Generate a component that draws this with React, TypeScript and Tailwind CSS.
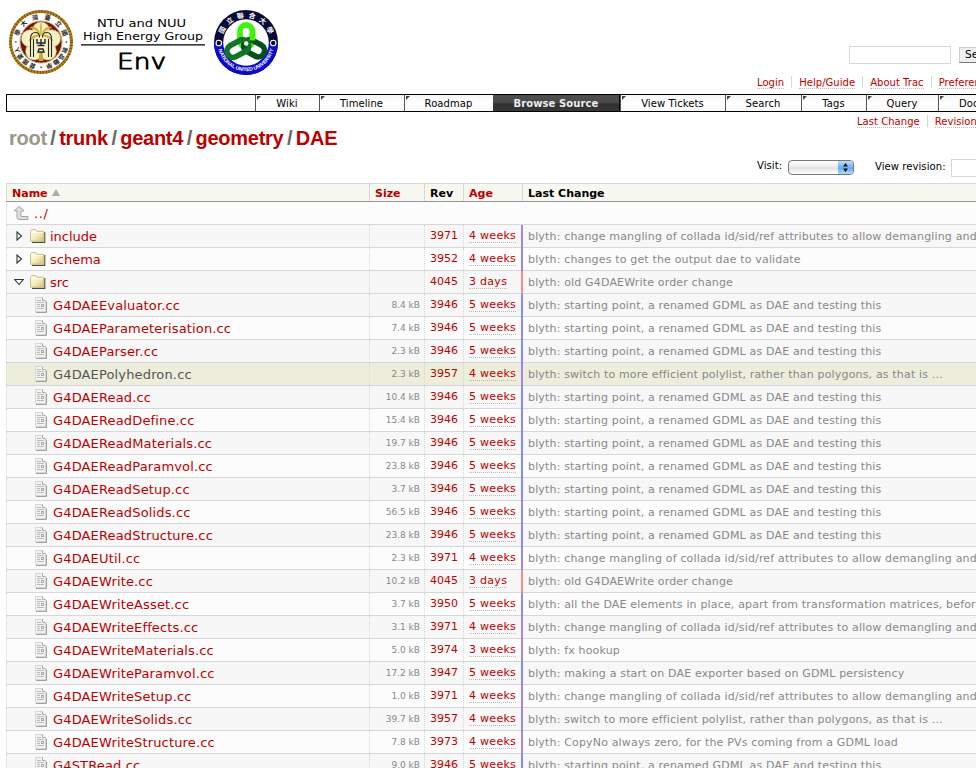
import React from "react";

type Entry = { name: string; kind: "closed" | "open" | "file"; size?: string; rev: string; age: string; msg: string; bar: string; hot?: boolean };

const START = "blyth: starting point, a renamed GDML as DAE and testing this";
const MANGLE = "blyth: change mangling of collada id/sid/ref attributes to allow demangling and";
const POLY = "blyth: switch to more efficient polylist, rather than polygons, as that is …";
const OLD = "blyth: old G4DAEWrite order change";
const B5 = "#8888ff";
const B4 = "#9b88e8";
const BN = "#ff8888";
const B3 = "#a988dc";

const file = (name: string, size: string, rev: string, age: string, msg: string, bar: string, hot = false): Entry => ({ name, kind: "file", size, rev, age, msg, bar, hot });

const ENTRIES: Entry[] = [
  { name: "include", kind: "closed", rev: "3971", age: "4 weeks", msg: MANGLE, bar: B4 },
  { name: "schema", kind: "closed", rev: "3952", age: "4 weeks", msg: "blyth: changes to get the output dae to validate", bar: "#9088f4" },
  { name: "src", kind: "open", rev: "4045", age: "3 days", msg: OLD, bar: BN },
  file("G4DAEEvaluator.cc", "8.4 kB", "3946", "5 weeks", START, B5),
  file("G4DAEParameterisation.cc", "7.4 kB", "3946", "5 weeks", START, B5),
  file("G4DAEParser.cc", "2.3 kB", "3946", "5 weeks", START, B5),
  file("G4DAEPolyhedron.cc", "2.3 kB", "3957", "4 weeks", POLY, B4, true),
  file("G4DAERead.cc", "10.4 kB", "3946", "5 weeks", START, B5),
  file("G4DAEReadDefine.cc", "15.4 kB", "3946", "5 weeks", START, B5),
  file("G4DAEReadMaterials.cc", "19.7 kB", "3946", "5 weeks", START, B5),
  file("G4DAEReadParamvol.cc", "23.8 kB", "3946", "5 weeks", START, B5),
  file("G4DAEReadSetup.cc", "3.7 kB", "3946", "5 weeks", START, B5),
  file("G4DAEReadSolids.cc", "56.5 kB", "3946", "5 weeks", START, B5),
  file("G4DAEReadStructure.cc", "23.8 kB", "3946", "5 weeks", START, B5),
  file("G4DAEUtil.cc", "2.3 kB", "3971", "4 weeks", MANGLE, B4),
  file("G4DAEWrite.cc", "10.2 kB", "4045", "3 days", OLD, BN),
  file("G4DAEWriteAsset.cc", "3.7 kB", "3950", "5 weeks", "blyth: all the DAE elements in place, apart from transformation matrices, before", B5),
  file("G4DAEWriteEffects.cc", "3.1 kB", "3971", "4 weeks", MANGLE, B3),
  file("G4DAEWriteMaterials.cc", "5.0 kB", "3974", "3 weeks", "blyth: fx hookup", B3),
  file("G4DAEWriteParamvol.cc", "17.2 kB", "3947", "5 weeks", "blyth: making a start on DAE exporter based on GDML persistency", B5),
  file("G4DAEWriteSetup.cc", "1.0 kB", "3971", "4 weeks", MANGLE, B3),
  file("G4DAEWriteSolids.cc", "39.7 kB", "3957", "4 weeks", POLY, B4),
  file("G4DAEWriteStructure.cc", "7.8 kB", "3973", "4 weeks", "blyth: CopyNo always zero, for the PVs coming from a GDML load", B3),
  file("G4STRead.cc", "9.0 kB", "3946", "5 weeks", START, B5),
];

function FolderIcon() {
  return (
    <svg width="16" height="14" viewBox="0 0 16 14" className="shrink-0">
      <defs>
        <linearGradient id="fold" x1="0" y1="0" x2="1" y2="1">
          <stop offset="0" stopColor="#fffef0" />
          <stop offset="0.5" stopColor="#f6edbd" />
          <stop offset="1" stopColor="#d8bd62" />
        </linearGradient>
      </defs>
      <path d="M2 13.300h12.700V3" fill="none" stroke="#4d4a42" strokeWidth="1.200" />
      <path d="M.5 12.200V2.200L1.700.6h4.100L7 2.300h6.800v9.900z" fill="url(#fold)" stroke="#cabf8d" strokeWidth="1" />
      <path d="M1.500 3.500h11.500" stroke="#fffdf0" />
    </svg>
  );
}

function FileIcon() {
  return (
    <svg width="12" height="16" viewBox="0 0 12 16" className="shrink-0">
      <path d="M1 15h10V4.500" fill="none" stroke="#858585" strokeWidth="1.500" />
      <path d="M.5.5h7l3 3v11H.5z" fill="#f2f2f0" stroke="#d6d6d4" />
      <path d="M7.500.5v3h3" fill="#fff" stroke="#aaa" />
      <path d="M2 3.500h4M2 5.500h7M2 7.500h3M2 9.500h3M2 11.500h7" stroke="#bbb" />
      <rect x="6.500" y="7.500" width="2" height="2" fill="none" stroke="#aaa" />
    </svg>
  );
}

function UpIcon() {
  return (
    <svg width="17" height="17" viewBox="0 0 17 17" className="shrink-0">
      <path d="M6 1.200L1.200 6H4v6.500q0 2 2 2h9v-3H8V6h3z" fill="#dededc" stroke="#a5a5a0" strokeLinejoin="round" />
    </svg>
  );
}

const polar = (r: number, deg: number) => {
  const a = ((deg - 90) * Math.PI) / 180;
  return [32 + r * Math.cos(a), 32 + r * Math.sin(a)];
};

function RingText({ chars, r, size, fill }: { chars: [string, number][]; r: number; size: number; fill: string }) {
  return (
    <g fill={fill} fontSize={size} fontWeight="700" textAnchor="middle" fontFamily="'Noto Sans CJK TC', sans-serif">
      {chars.map(([c, a], i) => {
        const [x, y] = polar(r, a);
        return (
          <text key={i} transform={`translate(${x} ${y}) rotate(${a})`} y={size * 0.37}>
            {c}
          </text>
        );
      })}
    </g>
  );
}

const PETALS = [0, 72, 144, 216, 288];

function NtuSeal() {
  return (
    <svg width="64" height="64" viewBox="0 0 64 64" className="shrink-0">
      <circle cx="32" cy="32" r="30.500" fill="#fff" stroke="#b07f1c" strokeWidth="3" />
      <circle cx="32" cy="32" r="30.500" fill="none" stroke="#7a520c" strokeWidth="3" strokeDasharray="1 2" />
      <circle cx="32" cy="32" r="21" fill="#6f1418" stroke="#c9a95a" strokeWidth="1" />
      <g fill="#f8f0c4" stroke="#d9c06a" strokeWidth=".6">
        {PETALS.map((d) => {
          const [x, y] = polar(11.5, d);
          return <circle key={d} cx={x} cy={y} r="8.600" />;
        })}
      </g>
      <circle cx="32" cy="32" r="11" fill="#f8f0c4" />
      <path d="M32 25C29 18 24 15 21 18c4 0 7 3 11 7 4-4 7-7 11-7-3-3-8 0-11 7zM32 25c-5-1-10 1-12 6 4-3 8-5 12-6 4 1 8 3 12 6-2-5-7-7-12-6zM32 24c-1-4-1-8 0-11 1 3 1 7 0 11z" fill="#cfae35" stroke="#cfae35" strokeWidth=".5" />
      <path d="M30.500 42l-1 9h5l-1-9z" fill="#c9a93a" />
      <path d="M21.500 47V29q0-6.500 5-6.500 4 0 4 5M42.500 47V29q0-6.500-5-6.500-4 0-4 5M24.500 47V29M39.500 47V29" fill="none" stroke="#20262a" strokeWidth="1.100" />
      <path d="M28 29v4h8v-4M28.500 35.500h7M32 29v7M30 39l-1 3h6l-1-3z" fill="none" stroke="#20262a" strokeWidth="1.400" />
      <RingText r={25.300} size={6.300} fill="#222" chars={[["學", -68], ["大", -43], ["灣", -14], ["臺", 15], ["立", 44], ["國", 69]]} />
      <RingText r={25.300} size={6} fill="#222" chars={[["·", 90], ["敦", 109], ["品", 126], ["勵", 143], ["學", 161], ["·", 180], ["愛", 200], ["國", 218], ["愛", 235], ["人", 251], ["·", 270]]} />
    </svg>
  );
}

function NuuSeal() {
  return (
    <svg width="64" height="65" viewBox="0 0 64 64" preserveAspectRatio="none" className="shrink-0">
      <defs>
        <path id="low" d="M3.800 32a28.200 28.200 0 0 0 56.400 0" />
      </defs>
      <circle cx="32" cy="32" r="32" fill="#0b0a36" />
      <path d="M0 32a32 32 0 0 0 64 0z" fill="#0c08cc" />
      <circle cx="32" cy="32" r="22.800" fill="#fff" />
      <g fill="none" strokeWidth="5.600">
        <rect x="26" y="14.600" width="12.400" height="22" rx="6.200" stroke="#3df50c" />
        <rect x="26" y="13.600" width="12.400" height="22" rx="6.200" stroke="#06501f" transform="rotate(118 32.200 33.500)" />
        <rect x="26" y="12.600" width="12.400" height="23" rx="6.200" stroke="#127524" transform="rotate(242 32.200 33.500)" />
        <path d="M38.400 23v7" stroke="#3df50c" />
      </g>
      <circle cx="32.200" cy="33" r="2.200" fill="#fff" />
      <circle cx="4.800" cy="32.500" r="3.300" fill="#fff" />
      <circle cx="59.200" cy="32.500" r="3.300" fill="#fff" />
      <circle cx="4.800" cy="32.500" r="2.200" fill="#0b0a36" />
      <circle cx="59.200" cy="32.500" r="2.200" fill="#0b0a36" />
      <RingText r={27} size={6.800} fill="#fff" chars={[["國", -63], ["立", -37], ["聯", -12], ["合", 13], ["大", 38], ["學", 63]]} />
      <text fontFamily="'Liberation Sans', sans-serif" fontWeight="700" fontSize="5" fill="#fff">
        <textPath href="#low" startOffset="7" textLength="75">NATIONAL UNITED UNIVERSITY</textPath>
      </text>
    </svg>
  );
}

function LogoText() {
  return (
    <svg width="124" height="66" viewBox="0 0 124 66" className="ml-[8px] shrink-0" fontFamily="'DejaVu Sans', sans-serif" fill="#000">
      <text x="16" y="17" fontSize="10.500" textLength="89" lengthAdjust="spacingAndGlyphs">NTU and NUU</text>
      <text x="2" y="30" fontSize="10.500" textLength="120" lengthAdjust="spacingAndGlyphs">High Energy Group</text>
      <path d="M0 34.800h124" stroke="#000" strokeWidth="1.300" />
      <text x="36" y="59" fontSize="21" fontWeight="200" stroke="#000" strokeWidth=".9" textLength="49" lengthAdjust="spacingAndGlyphs">Env</text>
    </svg>
  );
}

const TABS: [string, string][] = [
  ["Wiki", "w-[64px]"],
  ["Timeline", "w-[85px]"],
  ["Roadmap", "w-[89px]"],
  ["Browse Source", "w-[127px]"],
  ["View Tickets", "w-[105px]"],
  ["Search", "w-[76px]"],
  ["Tags", "w-[65px]"],
  ["Query", "w-[72px]"],
];

function Notch() {
  return (
    <svg width="5" height="5" viewBox="0 0 5 5" className="mt-px ml-px shrink-0">
      <path d="M0 0h4L0 4z" fill="#444" />
    </svg>
  );
}

function Tab({ label, width }: { label: string; width: string }) {
  if (label === "Browse Source")
    return (
      <div className={`${width} flex h-full shrink-0 justify-center border-r border-black bg-[linear-gradient(#505050_0%,#484848_50%,#303030_55%,#383838_100%)] leading-[17px] font-bold text-[#eee]`}>
        <span>{label}</span>
      </div>
    );
  return (
    <div className={`${width} flex h-full shrink-0 items-start border-l border-[#555]`}>
      <Notch />
      <span className="flex-1 pr-[7px] text-center leading-[17px] whitespace-nowrap">{label}</span>
    </div>
  );
}

function MetaLink({ children }: { children: string }) {
  return <span className="h-[13px] border-b border-dotted border-[#bbb] text-[10px] leading-[13px] tracking-[0.04px] whitespace-nowrap text-[#bb0000]">{children}</span>;
}

function Divider() {
  return <i className="mx-[7px] h-[12px] w-px shrink-0 bg-[#d7d7d7]" />;
}

const HEAD = "flex h-full shrink-0 items-center border-l border-[#d7d7d7] pl-[5px] pt-[3px]";

export default function App() {
  let fileIndex = 0;
  return (
    <div className="h-[768px] w-[976px] overflow-hidden bg-white font-['DejaVu_Sans',sans-serif] text-[11px] text-black">
      <header className="flex h-[94px] justify-between overflow-hidden">
        <div className="flex items-start pt-[10px] pl-[9px]">
          <NtuSeal />
          <LogoText />
          <div className="ml-[9px]"><NuuSeal /></div>
        </div>
        <div className="flex w-[220px] flex-col">
          <div className="flex h-[64px] pt-[46px] pl-[93px]">
            <div className="h-[18px] w-[102px] shrink-0 border border-[#d7d7d7]" />
            <div className="mt-px ml-[8px] flex h-[16px] w-[60px] shrink-0 items-center border border-[#ccc] border-b-[#777] bg-[#eee] pl-[5px] text-[10.5px]">Search</div>
          </div>
          <div className="mt-[12px] flex h-[15px] items-start pl-px">
            <MetaLink>Login</MetaLink>
            <Divider />
            <MetaLink>Help/Guide</MetaLink>
            <Divider />
            <MetaLink>About Trac</MetaLink>
            <Divider />
            <MetaLink>Preferences</MetaLink>
          </div>
        </div>
      </header>

      <nav className="ml-[6px] flex h-[18px] w-[1060px] border border-black bg-[linear-gradient(#f5f5f5,#fff_50%,#fafafa)] text-[10px] tracking-[0.08px]">
        <div className="w-[248px] shrink-0" />
        {TABS.map(([l, w]) => <Tab key={l} label={l} width={w} />)}
        <div className="flex w-[90px] shrink-0 items-start border-l border-[#555]">
          <Notch />
          <span className="pl-[14px] leading-[17px] whitespace-nowrap">Doc/API</span>
        </div>
      </nav>

      <div className="flex h-[71px] justify-between">
        <h1 className="flex items-center gap-[3.6px] self-start pt-[12px] pl-[9px] font-['Liberation_Sans',Arial,sans-serif] text-[20px] leading-[28px] font-bold tracking-[-0.28px] text-[#bb0000]">
          <span className="text-[#999988]">root</span>
          <span className="text-[#666]">/</span>
          <span>trunk</span>
          <span className="text-[#666]">/</span>
          <span>geant4</span>
          <span className="text-[#666]">/</span>
          <span>geometry</span>
          <span className="text-[#666]">/</span>
          <span>DAE</span>
        </h1>
        <div className="flex w-[220px] flex-col">
          <div className="flex h-[17px] items-start pt-[3px] pl-[101px]">
            <MetaLink>Last Change</MetaLink>
            <Divider />
            <MetaLink>Revision Log</MetaLink>
          </div>
          <div className="flex pt-[29px] text-[10px] tracking-[0.08px] whitespace-nowrap">
            <span className="w-[32px] shrink-0 pl-px leading-[16px]">Visit:</span>
            <div className="mt-[2px] flex h-[15px] w-[66px] shrink-0 overflow-hidden rounded-[4px] border border-[#777] bg-[linear-gradient(#fff,#eee_40%,#e2e2e2_55%,#fff)]">
              <div className="ml-auto flex w-[15px] items-center justify-center bg-[linear-gradient(#b9dcff,#6cabf2_55%,#a9dcff)]">
                <svg width="5" height="9" viewBox="0 0 5 9"><path d="M0 3.500L2.500 0 5 3.500zM0 5.500L2.500 9 5 5.500z" fill="#111" /></svg>
              </div>
            </div>
            <span className="mt-px ml-[21px] w-[71px] shrink-0 leading-[16px]">View revision:</span>
            <div className="mt-px ml-[5px] h-[18px] w-[60px] shrink-0 border border-[#d7d7d7]" />
          </div>
        </div>
      </div>

      <main className="ml-[6px] w-[970px] overflow-hidden">
        <div className="flex h-[19px] border-t border-b border-t-[#d7d7d7] border-b-[#999] bg-[#f7f7f0] font-bold">
          <div className={`${HEAD} w-[363px] text-[#bb0000]`}>
            Name
            <svg width="8" height="7" viewBox="0 0 8 7" className="mb-[3px] ml-[4px]"><path d="M4 0l4 7H0z" fill="#aaa" /></svg>
          </div>
          <div className={`${HEAD} w-[55px] text-[#bb0000]`}>Size</div>
          <div className={`${HEAD} w-[39px]`}>Rev</div>
          <div className={`${HEAD} w-[59px] text-[#bb0000]`}>Age</div>
          <div className={`${HEAD} flex-1`}>Last Change</div>
        </div>
        <div className="flex h-[23px] items-center border-b border-l border-b-[#d7d7d7] border-l-[#d7d7d7] bg-[#fcfcfc] pl-[6px] [border-left-style:dotted]">
          <UpIcon />
          <span className="ml-[4px] pt-[2px] text-[13px] leading-[20px] tracking-[0.6px] text-[#bb0000]">../</span>
        </div>
        {ENTRIES.map((e, i) => {
          const n = e.kind === "file" ? fileIndex++ : i;
          const bg = e.hot ? "bg-[#eceddb]" : n % 2 === 0 ? "bg-[#f7f7f7]" : "bg-[#fcfcfc]";
          return (
            <div key={e.name} className={`flex h-[23px] border-b border-[#d7d7d7] whitespace-nowrap ${bg}`}>
              <div className="flex w-[363px] shrink-0 items-center border-l border-dotted border-[#d7d7d7]">
                {e.kind === "file" ? (
                  <span className="flex items-center pl-[28px]"><FileIcon /></span>
                ) : (
                  <span className="flex items-center pl-[7px]">
                    <svg width="10" height="10" viewBox="0 0 10 10" className="mr-[6px]">
                      <path d={e.kind === "open" ? "M.8 2.500h8.400L5 7.500z" : "M3 1v8l4.500-4z"} fill="#fff" stroke="#333" strokeWidth="1.100" />
                    </svg>
                    <FolderIcon />
                  </span>
                )}
                <span className={`pt-[2px] text-[13px] leading-[20px] ${e.kind === "file" ? "ml-[6px] tracking-[0.15px]" : "ml-[4px]"} ${e.hot ? "text-[#555]" : "text-[#bb0000]"}`}>{e.name}</span>
              </div>
              <div className="flex w-[55px] shrink-0 justify-end border-l border-dotted border-[#d7d7d7] pr-[4px] text-[9px] leading-[23px] text-[#888]">{e.size}</div>
              <div className="w-[39px] shrink-0 border-l border-dotted border-[#d7d7d7] pl-[5px] leading-[21px] text-[#bb0000]">{e.rev}</div>
              <div className="w-[58px] shrink-0 border-l border-dotted border-[#d7d7d7] pt-[4px] pl-[5px]"><span className="block w-fit border-b border-dotted border-[#bbb] leading-[13px] tracking-[0.28px] text-[#bb0000]">{e.age}</span></div>
              <div className="mb-[-1px] w-[2px] shrink-0" style={{ backgroundColor: e.bar }} />
              <div className="flex-1 overflow-hidden pl-[5px] leading-[23px] tracking-[0.165px] text-[#888]">{e.msg}</div>
            </div>
          );
        })}
      </main>
    </div>
  );
}
